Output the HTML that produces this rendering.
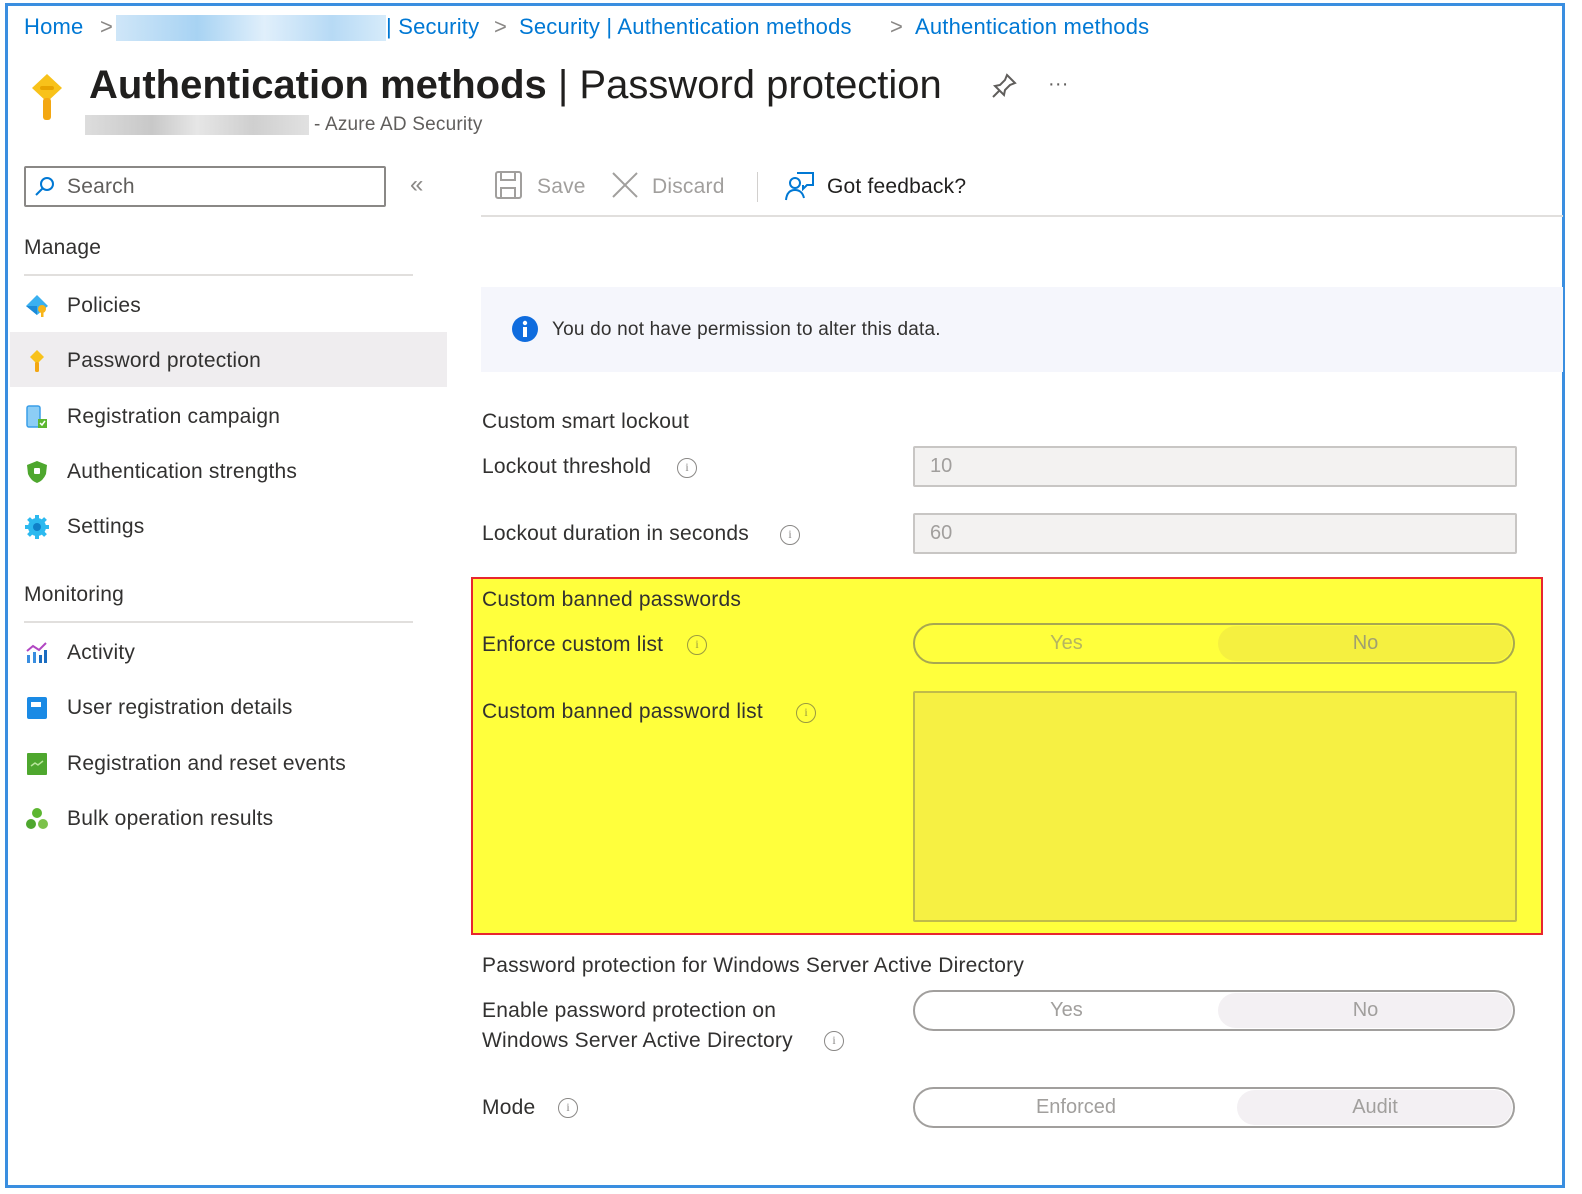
<!DOCTYPE html>
<html><head><meta charset="utf-8"><style>
*{margin:0;padding:0;box-sizing:border-box}
body{width:1582px;height:1194px;background:#fff;font-family:"Liberation Sans",sans-serif;color:#323130;position:relative;overflow:hidden}
.a{position:absolute}
.t{position:absolute;white-space:nowrap;line-height:24px;font-size:21px;letter-spacing:0.2px}
.blue{color:#0078d4}
.info{position:absolute;width:20px;height:20px;border:1.5px solid #8a8886;border-radius:50%;font-size:12px;line-height:17px;text-align:center;color:#8a8886;font-family:"Liberation Serif",serif}
.inp{position:absolute;left:913px;width:604px;height:41px;border:2px solid #c8c6c4;background:#f3f2f1;border-radius:2px;color:#a19f9d;font-size:20px;padding-left:15px;line-height:37px}
.tog{position:absolute;left:913px;width:602px;height:41px;border:2px solid #a19f9d;border-radius:21px;overflow:hidden}
.tog .s{position:absolute;top:1px;bottom:1px;right:1px;border-radius:19px;background:#f3f0f3}
.tog span{position:absolute;top:0;line-height:37px;font-size:20px;color:#a19f9d;text-align:center}
.ic{position:absolute;left:25px;width:24px;height:24px}
</style></head><body>
<div class="a" style="left:5px;top:3px;width:1560px;height:1185px;border:3px solid #3a8ee0"></div>

<!-- breadcrumb -->
<div class="t blue" style="left:24px;top:15px;font-size:22px">Home</div>
<div class="t" style="left:100px;top:15px;font-size:22px;color:#8a8886">&gt;</div>
<div class="a" style="left:116px;top:15px;width:270px;height:26px;background:linear-gradient(90deg,#cfe6f8,#a8d3f3 30%,#e0effb 55%,#b7daf5 80%,#d6ebfa)"></div>
<div class="t blue" style="left:386px;top:15px;font-size:22px">| Security</div>
<div class="t" style="left:494px;top:15px;font-size:22px;color:#8a8886">&gt;</div>
<div class="t blue" style="left:519px;top:15px;font-size:22px">Security | Authentication methods</div>
<div class="t" style="left:890px;top:15px;font-size:22px;color:#8a8886">&gt;</div>
<div class="t blue" style="left:915px;top:15px;font-size:22px">Authentication methods</div>

<!-- title -->
<svg class="a" style="left:28px;top:72px" width="38" height="52" viewBox="0 0 38 52"><path d="M19 2 L34 16 L19 30 L4 16Z" fill="#f8c21a"/><rect x="15" y="26" width="8" height="22" rx="3" fill="#f3a712"/><rect x="12" y="14" width="14" height="4" rx="2" fill="#e8a400"/></svg>
<div class="t" style="left:89px;top:62px;font-size:40px;line-height:46px;color:#201f1e;letter-spacing:0"><b>Authentication methods</b> | Password protection</div>
<svg class="a" style="left:990px;top:72px" width="28" height="28" viewBox="0 0 28 28" fill="none" stroke="#605e5c" stroke-width="2"><path d="M17 3 L25 11 L20 13 L15 18 L14 23 L5 14 L10 13 L15 8Z M9 19 L3 25"/></svg>
<div class="t" style="left:1048px;top:72px;font-size:20px;color:#605e5c">···</div>
<div class="a" style="left:85px;top:115px;width:224px;height:20px;background:linear-gradient(90deg,#ddd,#c8c8c8 30%,#e6e6e6 50%,#cfcfcf 75%,#e1e1e1)"></div>
<div class="t" style="left:314px;top:113px;font-size:19px;color:#605e5c">- Azure AD Security</div>

<!-- sidebar -->
<div class="a" style="left:24px;top:166px;width:362px;height:41px;border:2px solid #8a8886;border-radius:2px"></div>
<svg class="a" style="left:34px;top:175px" width="22" height="22" viewBox="0 0 22 22" fill="none" stroke="#0078d4" stroke-width="2"><circle cx="13" cy="9" r="6"/><path d="M8.5 13.5 L2 20"/></svg>
<div class="t" style="left:67px;top:175px;color:#605e5c">Search</div>
<div class="t" style="left:410px;top:173px;color:#8a8886;font-size:24px">«</div>
<div class="t" style="left:24px;top:236px">Manage</div>
<div class="a" style="left:24px;top:274px;width:389px;height:2px;background:#e1dfdd"></div>
<div class="a" style="left:10px;top:332px;width:437px;height:55px;background:#efedef"></div>

<svg class="ic" style="top:294px" viewBox="0 0 24 24"><path d="M12 1 L23 12 L12 21 L1 12Z" fill="#3ab0f0"/><path d="M1 12 L12 21 L12 12Z" fill="#1b8ad8"/><circle cx="17" cy="15" r="4" fill="#f8b51a"/><rect x="16" y="17" width="2.5" height="6" fill="#f8b51a"/></svg>
<div class="t" style="left:67px;top:294px">Policies</div>
<svg class="ic" style="top:349px" viewBox="0 0 24 24"><path d="M12 1 L19 8 L12 15 L5 8Z" fill="#f8c21a"/><rect x="10" y="13" width="4" height="10" rx="1.5" fill="#f3a712"/></svg>
<div class="t" style="left:67px;top:349px">Password protection</div>
<svg class="ic" style="top:405px" viewBox="0 0 24 24"><rect x="2" y="1" width="13" height="21" rx="2" fill="#8ccdf5" stroke="#3a9ee8" stroke-width="1.5"/><rect x="13" y="14" width="9" height="9" fill="#5cb630"/><path d="M15 18 L17 20 L20 16" stroke="#fff" stroke-width="1.5" fill="none"/></svg>
<div class="t" style="left:67px;top:405px">Registration campaign</div>
<svg class="ic" style="top:460px" viewBox="0 0 24 24"><path d="M12 1 L22 5 L21 14 Q18 21 12 23 Q6 21 3 14 L2 5Z" fill="#4ea72e"/><rect x="9" y="8" width="6" height="6" rx="1" fill="#fff"/></svg>
<div class="t" style="left:67px;top:460px">Authentication strengths</div>
<svg class="ic" style="top:515px" viewBox="0 0 24 24"><circle cx="12" cy="12" r="9" fill="#2cb9ef"/><g fill="#2cb9ef"><rect x="10" y="0" width="4" height="24"/><rect x="0" y="10" width="24" height="4"/><rect x="10" y="0" width="4" height="24" transform="rotate(45 12 12)"/><rect x="10" y="0" width="4" height="24" transform="rotate(-45 12 12)"/></g><circle cx="12" cy="12" r="4" fill="#0f80c8"/></svg>
<div class="t" style="left:67px;top:515px">Settings</div>

<div class="t" style="left:24px;top:583px">Monitoring</div>
<div class="a" style="left:24px;top:621px;width:389px;height:2px;background:#e1dfdd"></div>
<svg class="ic" style="top:641px" viewBox="0 0 24 24"><rect x="2" y="14" width="3" height="8" fill="#3a8ee0"/><rect x="8" y="11" width="3" height="11" fill="#3a8ee0"/><rect x="14" y="14" width="3" height="8" fill="#1b6dc1"/><rect x="19" y="9" width="3" height="13" fill="#1b6dc1"/><path d="M2 10 L8 5 L14 9 L21 2" stroke="#b146c2" stroke-width="2" fill="none"/></svg>
<div class="t" style="left:67px;top:641px">Activity</div>
<svg class="ic" style="top:696px" viewBox="0 0 24 24"><rect x="2" y="1" width="20" height="22" rx="2" fill="#1a8ae5"/><rect x="6" y="6" width="10" height="5" fill="#fff"/></svg>
<div class="t" style="left:67px;top:696px">User registration details</div>
<svg class="ic" style="top:752px" viewBox="0 0 24 24"><rect x="2" y="1" width="20" height="22" rx="1" fill="#4ea72e"/><path d="M6 14 L10 11 L13 13 L18 9" stroke="#b8e59c" stroke-width="1.5" fill="none"/></svg>
<div class="t" style="left:67px;top:752px">Registration and reset events</div>
<svg class="ic" style="top:807px" viewBox="0 0 24 24"><circle cx="12" cy="6" r="5" fill="#5cb630"/><circle cx="6" cy="17" r="5" fill="#4ea72e"/><circle cx="18" cy="17" r="5" fill="#7cc24a"/></svg>
<div class="t" style="left:67px;top:807px">Bulk operation results</div>

<!-- toolbar -->
<svg class="a" style="left:494px;top:170px" width="30" height="30" viewBox="0 0 30 30" fill="none" stroke="#a19f9d" stroke-width="2"><rect x="2" y="2" width="25" height="26" rx="2"/><path d="M7 2 V10 H21 V2 M7 28 V18 H21 V28"/></svg>
<div class="t" style="left:537px;top:175px;color:#a19f9d">Save</div>
<svg class="a" style="left:611px;top:171px" width="28" height="28" viewBox="0 0 28 28" stroke="#a19f9d" stroke-width="2"><path d="M2 2 L26 26 M26 2 L2 26"/></svg>
<div class="t" style="left:652px;top:175px;color:#a19f9d">Discard</div>
<div class="a" style="left:757px;top:172px;width:1px;height:30px;background:#d2d0ce"></div>
<svg class="a" style="left:783px;top:170px" width="32" height="32" viewBox="0 0 32 32" fill="none" stroke="#0078d4" stroke-width="2"><circle cx="12" cy="13" r="5"/><path d="M3 30 Q4 20 12 20 Q19 20 21 28"/><path d="M14 3 H30 V15 H24 L20 19 V15"/></svg>
<div class="t" style="left:827px;top:175px;color:#201f1e">Got feedback?</div>
<div class="a" style="left:481px;top:215px;width:1082px;height:2px;background:#e1dfdd"></div>

<!-- info bar -->
<div class="a" style="left:481px;top:287px;width:1082px;height:85px;background:#f5f6fc"></div>
<svg class="a" style="left:511px;top:315px" width="28" height="28" viewBox="0 0 28 28"><circle cx="14" cy="14" r="13" fill="#0f6cde"/><rect x="12" y="12" width="4" height="10" fill="#fff"/><circle cx="14" cy="8" r="2.2" fill="#fff"/></svg>
<div class="t" style="left:552px;top:318px;font-size:19px">You do not have permission to alter this data.</div>

<!-- smart lockout -->
<div class="t" style="left:482px;top:410px">Custom smart lockout</div>
<div class="t" style="left:482px;top:455px">Lockout threshold</div>
<div class="info" style="left:677px;top:458px">i</div>
<div class="inp" style="top:446px">10</div>
<div class="t" style="left:482px;top:522px">Lockout duration in seconds</div>
<div class="info" style="left:780px;top:525px">i</div>
<div class="inp" style="top:513px">60</div>

<!-- highlighted -->
<div class="a" style="left:471px;top:577px;width:1072px;height:358px;background:#ffff3c;border:2px solid #e8262e"></div>
<div class="t" style="left:482px;top:588px">Custom banned passwords</div>
<div class="t" style="left:482px;top:633px">Enforce custom list</div>
<div class="info" style="left:687px;top:635px;border-color:#9a9a40;color:#9a9a40">i</div>
<div class="tog" style="top:623px;border-color:#a8a850"><div class="s" style="left:303px;background:#f5f040"></div><span style="left:0;width:303px;color:#b5b560">Yes</span><span style="left:303px;width:295px;color:#a0a070">No</span></div>
<div class="t" style="left:482px;top:700px">Custom banned password list</div>
<div class="info" style="left:796px;top:703px;border-color:#9a9a40;color:#9a9a40">i</div>
<div class="a" style="left:913px;top:691px;width:604px;height:231px;background:#f6f043;border:2px solid #c0bb4a;border-radius:2px"></div>

<!-- windows server -->
<div class="t" style="left:482px;top:954px">Password protection for Windows Server Active Directory</div>
<div class="t" style="left:482px;top:999px">Enable password protection on</div>
<div class="t" style="left:482px;top:1029px">Windows Server Active Directory</div>
<div class="info" style="left:824px;top:1031px">i</div>
<div class="tog" style="top:990px"><div class="s" style="left:303px"></div><span style="left:0;width:303px">Yes</span><span style="left:303px;width:295px">No</span></div>
<div class="t" style="left:482px;top:1096px">Mode</div>
<div class="info" style="left:558px;top:1098px">i</div>
<div class="tog" style="top:1087px"><div class="s" style="left:322px"></div><span style="left:0;width:322px">Enforced</span><span style="left:322px;width:276px">Audit</span></div>
</body></html>
